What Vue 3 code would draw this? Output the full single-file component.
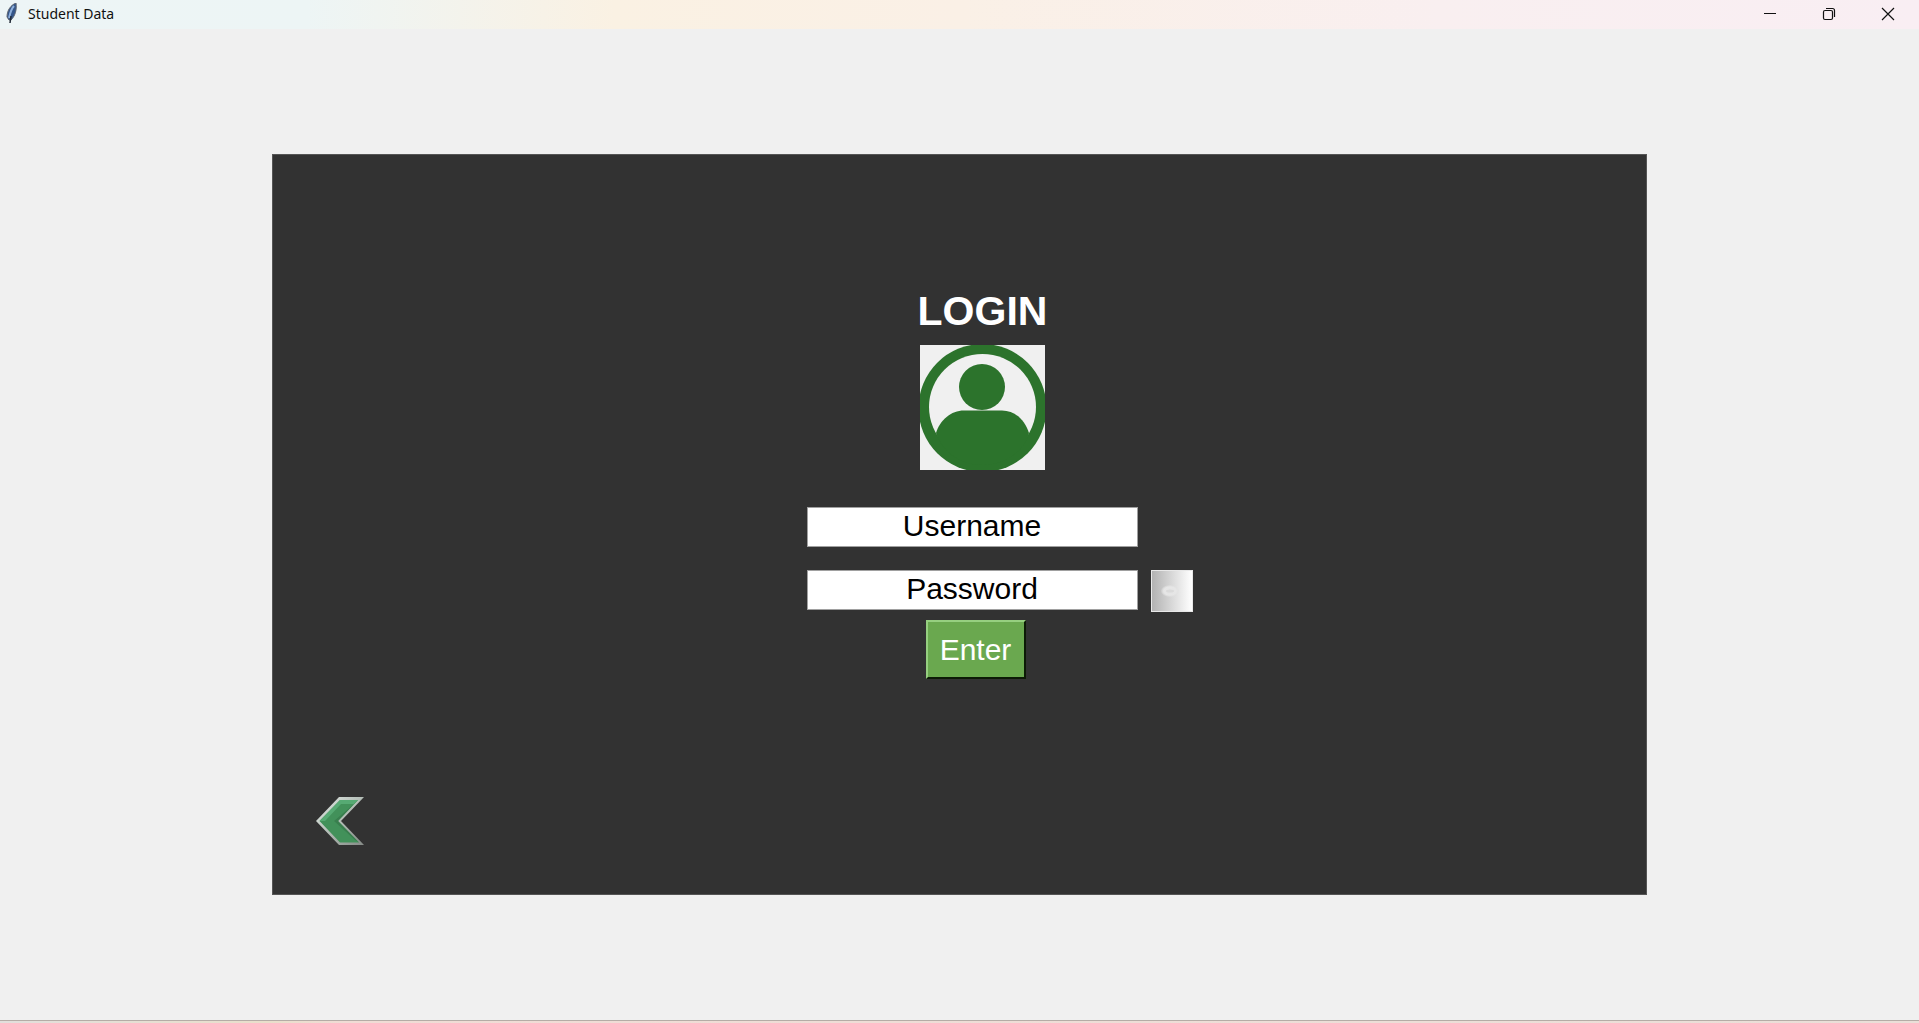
<script setup>
import { ref } from 'vue'

const username = ref('Username')
const password = ref('Password')
</script>

<template>
  <div class="window">
    <header class="titlebar">
      <svg class="feather" width="12" height="22" viewBox="0 0 12 22" aria-hidden="true">
        <path d="M10 0C5 2 1 7 1 14l2 3 2 0C9 13 11 7 10 0Z" fill="#34568a" stroke="#5c6470" stroke-width="1" />
        <path d="M8 3C5 6 4 11 3 15" fill="none" stroke="#8fb0dc" stroke-width="2" />
        <path d="M5 13L4 20" fill="none" stroke="#222a36" stroke-width="1.500" />
      </svg>
      <span class="title">Student Data</span>
      <div class="controls">
        <button type="button" aria-label="Minimize">
          <svg width="14" height="14" viewBox="0 0 14 14"><path d="M1 6.500H13" stroke="#111" /></svg>
        </button>
        <button type="button" aria-label="Restore">
          <svg width="14" height="14" viewBox="0 0 14 14" fill="none" stroke="#111" stroke-width="1.200">
            <rect x="1.500" y="3.500" width="9" height="9" rx="1.500" />
            <path d="M4 1.500h6.500a2 2 0 0 1 2 2V10" />
          </svg>
        </button>
        <button type="button" aria-label="Close">
          <svg width="14" height="14" viewBox="0 0 14 14"><path d="M1 1L13 13M13 1L1 13" stroke="#111" stroke-width="1.200" /></svg>
        </button>
      </div>
    </header>

    <main class="content">
      <section class="panel">
        <form class="login" @submit.prevent>
          <div class="heading">
            <h1>LOGIN</h1>
            <svg class="avatar" width="125" height="125" viewBox="0 0 125 125" aria-hidden="true">
              <rect width="125" height="125" fill="#f0f0f0" />
              <circle cx="62.500" cy="63" r="64" fill="#2c732c" />
              <ellipse cx="62.500" cy="62" rx="53.500" ry="53" fill="#f0f0f0" />
              <circle cx="62" cy="42" r="23" fill="#2c732c" />
              <path d="M16 88C20 75 31 65.500 44 65.500H82C95 65.500 105 75 109 88C103 108 84 120 62.500 120S23 108 16 88Z" fill="#2c732c" />
            </svg>
          </div>
          <input v-model="username" class="field" type="text" aria-label="Username" autocomplete="off" />
          <div class="row">
            <input v-model="password" class="field" type="text" aria-label="Password" autocomplete="off" />
            <button class="reveal" type="button" aria-label="Show password">
              <svg width="20" height="14" viewBox="0 0 20 14">
                <defs>
                  <radialGradient id="eye">
                    <stop offset="0" stop-color="#e4e4e4" />
                    <stop offset="0.700" stop-color="#e6e6e6" />
                    <stop offset="1" stop-color="#e0e0e0" stop-opacity="0.300" />
                  </radialGradient>
                </defs>
                <ellipse cx="10" cy="7" rx="9" ry="6" fill="url(#eye)" />
                <ellipse cx="10" cy="7" rx="4" ry="1.500" fill="#dadada" />
              </svg>
            </button>
          </div>
          <button class="enter" type="submit">Enter</button>
        </form>

        <button class="back" type="button" aria-label="Back">
          <svg width="48" height="48" viewBox="0 0 48 48">
            <defs>
              <linearGradient id="edge" x1="0" y1="0" x2="1" y2="1">
                <stop offset="0" stop-color="#e6ece8" />
                <stop offset="0.5" stop-color="#b3bdb6" />
                <stop offset="1" stop-color="#858a86" />
              </linearGradient>
            </defs>
            <path d="M0 24L23 0H48L25 24L48 48H23Z" fill="url(#edge)" />
            <path d="M3.500 24L24 3H42L22 24L43 45.500H24Z" fill="#42915a" />
            <path d="M3.500 24L24 3H42L38 7H25L9 24Z" fill="#56aa73" />
            <path d="M42 3L22 24L43 45.500L39 43L18 24L38 7Z" fill="#397f4e" />
          </svg>
        </button>
      </section>
    </main>
    <footer class="edge"></footer>
  </div>
</template>

<style>
body {
  margin: 0;
}
</style>

<style scoped>
.window {
  display: flex;
  flex-direction: column;
  min-height: 100vh;
  background: #f0f0f0;
  font-family: "Liberation Sans", Arial, sans-serif;
}

button {
  padding: 0;
  border: 0;
  background: none;
  font-family: inherit;
}

svg {
  display: block;
}

.titlebar {
  display: flex;
  align-items: center;
  box-sizing: border-box;
  height: 29px;
  padding: 0 2px 1px 6px;
  background: linear-gradient(90deg, #edf5f6 0%, #edf5f5 16%, #faf1e3 32%, #faf0e6 50%, #f9eff0 75%, #f9eef3 100%);
}

.title {
  margin-left: 10px;
  font: 14px/20px "Noto Sans", sans-serif;
  color: #111;
}

.controls {
  display: flex;
  align-self: stretch;
  margin-left: auto;
}

.controls button {
  display: flex;
  align-items: center;
  justify-content: center;
  width: 59px;
}

.content {
  display: flex;
  flex: 1;
  padding: 125px 14.167%;
}

.panel {
  box-sizing: border-box;
  display: flex;
  flex: 1;
  flex-direction: column;
  justify-content: space-between;
  align-items: flex-start;
  padding: 132px 0 49px;
  border: 1px solid #555;
  background: #323232;
}

.login {
  display: flex;
  flex-direction: column;
  align-items: flex-start;
  margin-left: calc(50% - 153px);
}

.heading {
  display: flex;
  flex-direction: column;
  align-items: center;
  gap: 10px;
  width: 352px;
  margin-bottom: 37px;
}

h1 {
  margin: 0;
  font-size: 41px;
  line-height: 48px;
  font-weight: bold;
  color: #fff;
}

.field {
  box-sizing: border-box;
  width: 331px;
  height: 40px;
  padding: 0 2px 2px;
  border: 1px solid #a0a0a0;
  background: #fff;
  font-family: inherit;
  font-size: 30px;
  text-align: center;
  color: #000;
}

.row {
  display: flex;
  gap: 13px;
  margin: 23px 0 8px;
}

.reveal {
  box-sizing: border-box;
  display: flex;
  align-items: center;
  justify-content: center;
  width: 42px;
  height: 42px;
  padding-right: 4px;
  border: 1px solid #e8e8e8;
  background: linear-gradient(90deg, #b2b2b2, #fff);
}

.enter {
  box-sizing: border-box;
  width: 100px;
  height: 59px;
  margin-left: 119px;
  border: 2px solid;
  border-color: #96cf80 #0c1a06 #0c1a06 #96cf80;
  background: #6aa84f;
  font-size: 30px;
  color: #fff;
}

.back {
  margin-left: 43px;
}

.edge {
  height: 2px;
  border-top: 1px solid #b5aca6;
  background: linear-gradient(90deg, #e2dfdc, #e9dfcb 14%, #f0dcd5 18%, #eadfd8);
}
</style>
